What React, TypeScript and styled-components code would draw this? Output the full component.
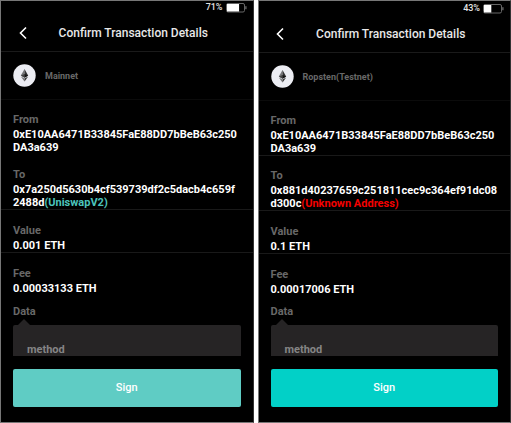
import React from "react";
import styled, { createGlobalStyle } from "styled-components";

const GlobalStyle = createGlobalStyle`
  * { box-sizing: border-box; }
  body { margin: 0; background: #fff; font-family: Roboto, "Noto Sans", sans-serif; }
`;

const Page = styled.main`
  display: grid;
  grid-template-columns: 1fr 1fr;
  gap: 4px;
  min-height: 100vh;
`;

const Screen = styled.section<{ $top: number }>`
  display: flex;
  flex-direction: column;
  min-width: 0;
  padding: ${(p) => p.$top}px 0 15px;
  background: #000;
  border: 1px solid #777;
  border-right-color: #333;
`;

const StatusBar = styled.div`
  display: flex;
  justify-content: flex-end;
  align-items: center;
  gap: 3px;
  height: 13px;
  padding-right: 6px;
  color: #e4e4e4;
  font-size: 9px;
  line-height: 13px;
  font-weight: 500;
`;

const Header = styled.header`
  display: grid;
  grid-template-columns: 43px 1fr 30px;
  align-items: center;
  height: 38px;
  border-bottom: 1px solid #1a1a1a;
`;

const BackButton = styled.button`
  display: flex;
  justify-content: center;
  padding: 0;
  border: 0;
  background: none;
  color: #fff;
`;

const Title = styled.h1`
  margin: 0;
  color: #e8e8e8;
  font-size: 12px;
  line-height: 16px;
  font-weight: 500;
  text-align: center;
  white-space: nowrap;
`;

const Network = styled.div`
  display: flex;
  align-items: center;
  gap: 9px;
  height: 48px;
  padding: 0 12px;
  border-bottom: 1px solid #0b0b0b;
  color: #686868;
  font-size: 9px;
  font-weight: 700;
`;

const Details = styled.dl`
  display: flex;
  flex: 1;
  flex-direction: column;
  margin: 0;
`;

const Row = styled.div<{ $line?: boolean; $amount?: boolean; $grow?: boolean }>`
  flex: ${(p) => (p.$grow ? "1 0 auto" : "none")};
  padding: ${(p) => (p.$amount ? 13 : 12)}px 12px 0;
  border-bottom: 1px solid ${(p) => (p.$line ? "#191919" : "transparent")};
`;

const Label = styled.dt`
  color: #686868;
  font-size: 11px;
  line-height: 15px;
  font-weight: 700;
`;

const Value = styled.dd`
  margin: 1px 0 0;
  color: #fff;
  font-size: 11px;
  line-height: 13px;
  font-weight: 700;
  word-break: break-all;
`;

const Tag = styled.span<{ $color: string }>`
  color: ${(p) => p.$color};
  word-break: normal;
`;

const DataRow = styled.div`
  padding: 0 12px;
`;

const DataBox = styled.dd`
  position: relative;
  height: 37px;
  margin: 0;
  padding-top: 6px;
`;

const Arrow = styled.svg`
  position: absolute;
  top: 0;
  left: 5px;
`;

const Method = styled.div`
  height: 31px;
  padding: 17px 14px 0;
  overflow: hidden;
  border-radius: 2px 2px 0 0;
  background: #262425;
  color: #858585;
  font-size: 11px;
  line-height: 16px;
  font-weight: 700;
`;

const SignButton = styled.button<{ $color: string }>`
  height: 38px;
  margin: 13px 12px 0;
  border: 0;
  border-radius: 2px;
  background: ${(p) => p.$color};
  color: #fff;
  font: 500 11px/16px Roboto, sans-serif;
`;

function Battery({ level }: { level: number }) {
  return (
    <svg width="21" height="10" viewBox="0 0 21 10" aria-hidden="true">
      <rect x="0.5" y="0.5" width="18" height="8.5" rx="1.5" fill="none" stroke="#666" />
      <rect x="1" y="1" width={(level / 100) * 17} height="7.5" fill="#fff" />
      <rect x="19.3" y="3.2" width="1.2" height="3" fill="#777" />
    </svg>
  );
}

function EthereumMark() {
  return (
    <svg width="23" height="23" viewBox="0 0 23 23" aria-hidden="true">
      <circle cx="11.5" cy="11.5" r="11.2" fill="#ecedf3" />
      <path d="M11.5 5 L7.8 11.6 L11.5 13.8Z" fill="#77787a" />
      <path d="M11.5 5 L15.2 11.6 L11.5 13.8Z" fill="#343434" />
      <path d="M7.8 11.6 L11.5 9.9 V13.8Z" fill="#454546" />
      <path d="M15.2 11.6 L11.5 9.9 V13.8Z" fill="#141414" />
      <path d="M7.8 12.4 L11.5 14.5 V17.5Z" fill="#77787a" />
      <path d="M15.2 12.4 L11.5 14.5 V17.5Z" fill="#343434" />
    </svg>
  );
}

type Transaction = {
  top: number;
  battery: number;
  network: string;
  from: string;
  fromLine: boolean;
  to: string;
  tag: string;
  tagColor: string;
  value: string;
  fee: string;
  signColor: string;
};

const transactions: Transaction[] = [
  {
    top: 0,
    battery: 71,
    network: "Mainnet",
    from: "0xE10AA6471B33845FaE88DD7bBeB63c250DA3a639",
    fromLine: false,
    to: "0x7a250d5630b4cf539739df2c5dacb4c659f2488d",
    tag: "(UniswapV2)",
    tagColor: "#4cc4bc",
    value: "0.001 ETH",
    fee: "0.00033133 ETH",
    signColor: "#5fccc4",
  },
  {
    top: 1,
    battery: 43,
    network: "Ropsten(Testnet)",
    from: "0xE10AA6471B33845FaE88DD7bBeB63c250DA3a639",
    fromLine: true,
    to: "0x881d40237659c251811cec9c364ef91dc08d300c",
    tag: "(Unknown Address)",
    tagColor: "#f40000",
    value: "0.1 ETH",
    fee: "0.00017006 ETH",
    signColor: "#02d0c7",
  },
];

function ConfirmScreen({ tx }: { tx: Transaction }) {
  return (
    <Screen $top={tx.top}>
      <StatusBar>
        <span>{tx.battery}%</span>
        <Battery level={tx.battery} />
      </StatusBar>
      <Header>
        <BackButton type="button" aria-label="Back">
          <svg width="8" height="14" viewBox="0 0 8 14" aria-hidden="true">
            <path d="M7 1.5 L1.5 7 L7 12.5" fill="none" stroke="currentColor" strokeWidth="1.6" />
          </svg>
        </BackButton>
        <Title>Confirm Transaction Details</Title>
      </Header>
      <Network>
        <EthereumMark />
        <span>{tx.network}</span>
      </Network>
      <Details>
        <Row $line={tx.fromLine}>
          <Label>From</Label>
          <Value>{tx.from}</Value>
        </Row>
        <Row $line>
          <Label>To</Label>
          <Value>
            {tx.to}
            <Tag $color={tx.tagColor}>{tx.tag}</Tag>
          </Value>
        </Row>
        <Row $line $amount>
          <Label>Value</Label>
          <Value>{tx.value}</Value>
        </Row>
        <Row $amount $grow>
          <Label>Fee</Label>
          <Value>{tx.fee}</Value>
        </Row>
        <DataRow>
          <Label>Data</Label>
          <DataBox>
            <Arrow width="12" height="6" viewBox="0 0 12 6" aria-hidden="true">
              <path d="M0 6 L6 0 L12 6Z" fill="#262425" />
            </Arrow>
            <Method>method</Method>
          </DataBox>
        </DataRow>
      </Details>
      <SignButton type="button" $color={tx.signColor}>
        Sign
      </SignButton>
    </Screen>
  );
}

export default function App() {
  return (
    <>
      <GlobalStyle />
      <Page>
        {transactions.map((tx) => (
          <ConfirmScreen key={tx.network} tx={tx} />
        ))}
      </Page>
    </>
  );
}
